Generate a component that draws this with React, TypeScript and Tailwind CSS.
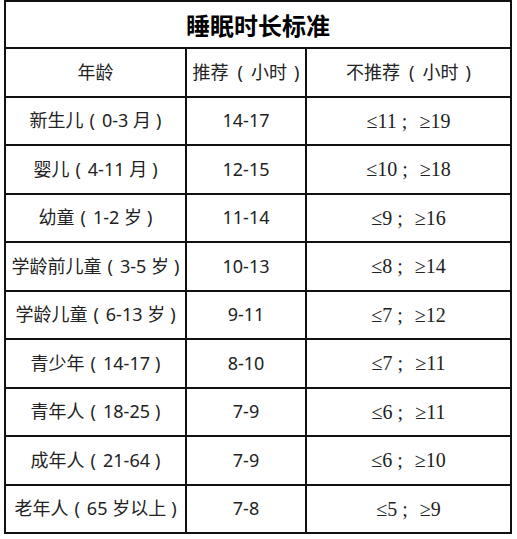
import React from "react";

type Row = { name: string; inner: React.ReactNode; rec: string; lo: string; hi: string };

const rows: Row[] = [
  { name: "新生儿", inner: "0-3 月", rec: "14-17", lo: "≤11", hi: "≥19" },
  { name: "婴儿", inner: "4-11 月", rec: "12-15", lo: "≤10", hi: "≥18" },
  { name: "幼童", inner: "1-2 岁", rec: "11-14", lo: "≤9", hi: "≥16" },
  { name: "学龄前儿童", inner: "3-5 岁", rec: "10-13", lo: "≤8", hi: "≥14" },
  { name: "学龄儿童", inner: "6-13 岁", rec: "9-11", lo: "≤7", hi: "≥12" },
  { name: "青少年", inner: "14-17", rec: "8-10", lo: "≤7", hi: "≥11" },
  { name: "青年人", inner: "18-25", rec: "7-9", lo: "≤6", hi: "≥11" },
  { name: "成年人", inner: "21-64", rec: "7-9", lo: "≤6", hi: "≥10" },
  { name: "老年人", inner: "65 岁以上", rec: "7-8", lo: "≤5", hi: "≥9" },
];

const cell =
  "bg-white flex items-center justify-center h-[46.5px] text-[18px] text-[#222] whitespace-nowrap";

function Paren({
  name,
  inner,
  open = "ml-[6px] mr-[7px]",
  close = "ml-[5px]",
}: {
  name: string;
  inner: React.ReactNode;
  open?: string;
  close?: string;
}) {
  return (
    <span className="flex items-center">
      <span>{name}</span>
      <span className={open}>(</span>
      <span>{inner}</span>
      <span className={close}>)</span>
    </span>
  );
}

function Range({ lo, hi }: { lo: string; hi: string }) {
  return (
    <span
      className="flex items-center text-[20px] text-[#222]"
      style={{ fontFamily: '"Liberation Serif", "DejaVu Serif", serif' }}
    >
      <span>{lo}</span>
      <span className="ml-[5px] mr-[12px]">;</span>
      <span>{hi}</span>
    </span>
  );
}

export default function App() {
  return (
    <div
      className="w-[517px] h-[539px] bg-white"
      style={{ fontFamily: '"Noto Sans", "Noto Sans CJK SC", sans-serif' }}
    >
      <div className="ml-[4px] w-[508px] bg-[#111] p-[2px] grid grid-cols-[179px_118px_203px] gap-[2px]">
        <div
          className="col-span-3 bg-white flex items-center justify-center h-[45px] text-[24px] font-bold text-black"
          style={{ fontFamily: '"Noto Sans CJK SC", sans-serif' }}
        >
          睡眠时长标准
        </div>
        <div className={cell}>年龄</div>
        <div className={cell}>
          <Paren name="推荐" inner="小时" open="ml-[9px] mr-[8px]" close="ml-[7px]" />
        </div>
        <div className={cell}>
          <Paren name="不推荐" inner="小时" open="ml-[9px] mr-[8px]" close="ml-[7px]" />
        </div>
        {rows.map((r, i) => (
          <React.Fragment key={i}>
            <div className={cell}>
              <Paren name={r.name} inner={r.inner} />
            </div>
            <div className={cell}>{r.rec}</div>
            <div className={cell}>
              <Range lo={r.lo} hi={r.hi} />
            </div>
          </React.Fragment>
        ))}
      </div>
    </div>
  );
}
